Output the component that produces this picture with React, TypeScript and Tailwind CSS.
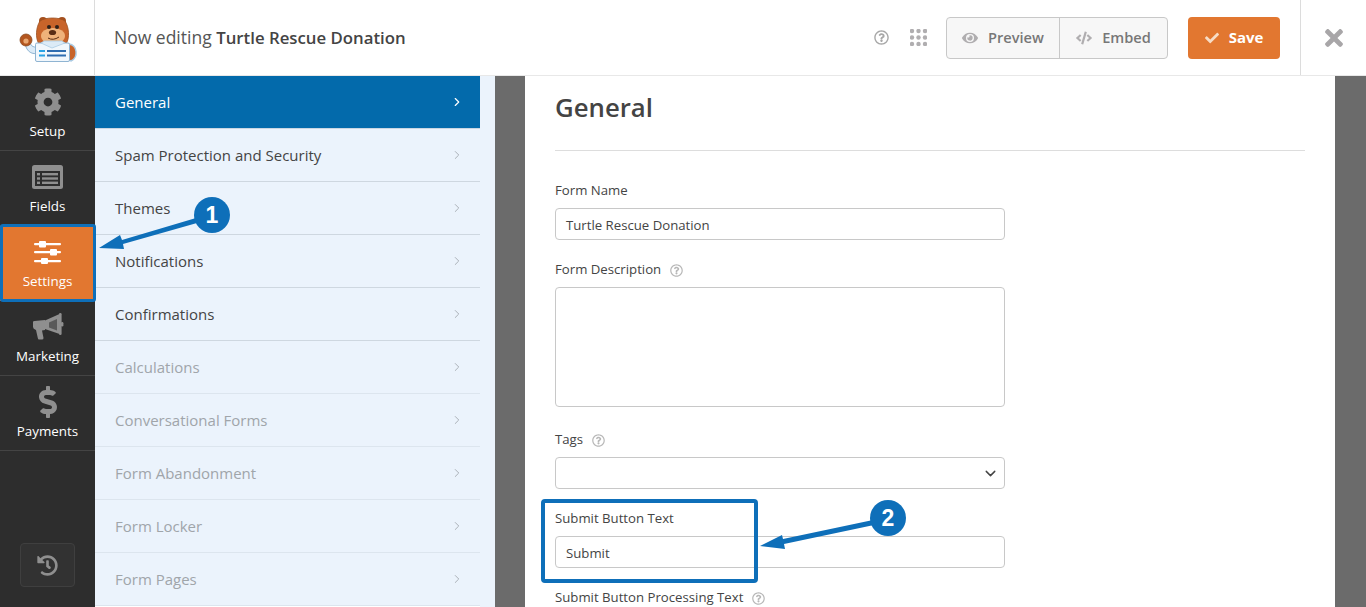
import { FaCog, FaDollarSign, FaHistory, FaEye, FaCode, FaCheck, FaTimes, FaRegQuestionCircle } from "react-icons/fa";
import { ChevronRight, ChevronDown } from "lucide-react";

function FieldsIcon() {
  return (
    <svg width="31" height="24" viewBox="0 0 31 24">
      <rect width="31" height="24" rx="2.5" fill="#8f8f8f" />
      <rect x="3" y="6" width="25" height="15" fill="#2d2d2d" />
      <g fill="#8f8f8f">
        <rect x="5" y="8" width="3" height="2.4" />
        <rect x="5" y="12.3" width="3" height="2.4" />
        <rect x="5" y="16.6" width="3" height="2.4" />
        <rect x="10" y="8" width="16" height="2.4" />
        <rect x="10" y="12.3" width="16" height="2.4" />
        <rect x="10" y="16.6" width="16" height="2.4" />
      </g>
    </svg>
  );
}

function SlidersIcon() {
  return (
    <svg width="27" height="24" viewBox="0 0 27 24" fill="#fff">
      <rect y="3" width="27" height="2.2" rx="1" />
      <rect y="11" width="27" height="2.2" rx="1" />
      <rect y="20" width="27" height="2.2" rx="1" />
      <rect x="5" y="1" width="7" height="6.4" rx="1" />
      <rect x="16" y="9" width="7" height="6.4" rx="1" />
      <rect x="7" y="18" width="7" height="6" rx="1" />
    </svg>
  );
}

function MegaphoneIcon() {
  return (
    <svg width="32" height="27" viewBox="0 0 32 27" fill="#8f8f8f">
      <path d="M1 9 Q1 8 2.5 8 L13 7 L13 17 L10 17.5 L11.5 25 Q11.5 26.5 10 26.5 L7 26.5 Q6 26.5 5.8 25 L4 17 Q1 16 1 14 Z" />
      <path d="M13 7.5 L27.5 1 L27.5 21 L13 16 Z" fill="#8f8f8f" />
      <path d="M17 9.5 L25 6 L25 17.5 L17 14.5 Z" fill="#2d2d2d" opacity="0.55" />
      <rect x="27" y="0" width="2.6" height="22" rx="1.2" />
      <rect x="29" y="9" width="2.4" height="4.5" rx="1.2" />
    </svg>
  );
}

const sideItems = [
  { label: "Setup", icon: <FaCog size={28} /> },
  { label: "Fields", icon: <FieldsIcon /> },
  { label: "Settings", icon: <SlidersIcon />, active: true },
  { label: "Marketing", icon: <MegaphoneIcon /> },
  { label: "Payments", icon: <FaDollarSign size={32} /> },
];

const panelItems = [
  { label: "General", active: true },
  { label: "Spam Protection and Security" },
  { label: "Themes" },
  { label: "Notifications" },
  { label: "Confirmations" },
  { label: "Calculations", disabled: true },
  { label: "Conversational Forms", disabled: true },
  { label: "Form Abandonment", disabled: true },
  { label: "Form Locker", disabled: true },
  { label: "Form Pages", disabled: true },
];

function BearLogo() {
  return (
    <svg width="60" height="50" viewBox="0 0 60 50">
      {/* raised paw and sleeve */}
      <path d="M6 30 C8 38 13 41 20 39 L20 33 C15 34 12 32 11 29 Z" fill="#dcebf7" stroke="#8fb4d2" strokeWidth="1" />
      <circle cx="7" cy="26" r="6" fill="#b4561f" stroke="#8a4a20" strokeWidth="0.8" />
      <circle cx="7" cy="27" r="2.6" fill="#e9a873" />
      {/* ears and head */}
      <circle cx="24" cy="7" r="4" fill="#a5501e" />
      <circle cx="43" cy="7" r="4" fill="#a5501e" />
      <path d="M21 7 C26 3 41 3 46 7 C50 13 51 24 47 30 L20 30 C16 24 17 13 21 7 Z" fill="#c8642a" stroke="#9a4f20" strokeWidth="0.8" />
      <ellipse cx="34" cy="22" rx="12" ry="8" fill="#efb27a" />
      <circle cx="30" cy="13" r="2" fill="#2e2019" />
      <circle cx="38" cy="13" r="2" fill="#2e2019" />
      <ellipse cx="33.5" cy="18.5" rx="3.6" ry="2.6" fill="#5a2d14" />
      <path d="M29 24 Q34 27 40 23" fill="none" stroke="#5a2d14" strokeWidth="1" />
      {/* right arm */}
      <path d="M50 30 C58 31 60 43 52 47 L49 46 Z" fill="#c8642a" stroke="#a9cbe4" strokeWidth="1.4" />
      {/* form sheet and collar */}
      <rect x="16.5" y="29" width="34" height="18.5" rx="1.5" fill="#f1f7fc" stroke="#8fb4d2" strokeWidth="1" />
      <path d="M22 29 L33 34 L46 29 L43 27 L25 27 Z" fill="#dcebf7" stroke="#a9cbe4" strokeWidth="0.8" />
      <rect x="20" y="36" width="6" height="2" fill="#2aa4e6" />
      <rect x="20" y="40.5" width="6" height="2" fill="#2aa4e6" />
      <rect x="28" y="36" width="19" height="2" fill="#2f6db0" />
      <rect x="28" y="40.5" width="19" height="2" fill="#2f6db0" />
    </svg>
  );
}

function Dots() {
  const pts = [2, 8.5, 15];
  return (
    <svg width="17" height="17" viewBox="0 0 17 17" fill="#b0aeb0">
      {pts.map((y) => pts.map((x) => <circle key={`${x}-${y}`} cx={x} cy={y} r="2.2" />))}
    </svg>
  );
}

function Field({ label, help, children, className }: { label: string; help?: boolean; children?: React.ReactNode; className?: string }) {
  return (
    <div className={className}>
      <div className="flex items-center gap-[9px] h-[20px] pt-[2px] text-[13.2px] text-[#444]">
        <span>{label}</span>
        {help && <FaRegQuestionCircle className="text-[#b8b8b8]" size={13} />}
      </div>
      {children}
    </div>
  );
}

function TextBox({ value }: { value?: string }) {
  return (
    <div className="mt-[8px] w-[450px] h-[32px] flex items-center px-[10px] pt-[3px] border border-[#c8c8c8] rounded-[4px] bg-white text-[13.2px] text-[#444]">
      {value}
    </div>
  );
}

export default function App() {
  return (
    <div className="relative w-[1366px] h-[607px] overflow-hidden bg-white font-['Open_Sans',sans-serif]">
      <header className="flex items-stretch h-[76px] border-b border-[#e8e8e8]">
        <div className="w-[95px] shrink-0 border-r border-[#dcdcdc] flex items-center justify-center pt-[2px] pl-[3px]">
          <BearLogo />
        </div>
        <div className="pl-[19px] flex items-center text-[17.5px] text-[#555]">
          Now editing&nbsp;<strong className="text-[16.8px] font-semibold text-[#444]">Turtle Rescue Donation</strong>
        </div>
        <div className="ml-auto flex items-center">
          <FaRegQuestionCircle className="text-[#a8a8a8]" size={15} />
          <div className="ml-[21px]"><Dots /></div>
          <div className="ml-[19px] flex h-[42px] border border-[#c8c8c8] rounded-[4px] bg-[#f7f7f7] text-[14.6px] font-semibold text-[#777]">
            <div className="w-[113px] flex items-center justify-center gap-[10px] border-r border-[#c8c8c8]">
              <FaEye className="text-[#b0aeb0]" size={16} />
              <span>Preview</span>
            </div>
            <div className="w-[107px] flex items-center justify-center gap-[10px]">
              <FaCode className="text-[#b0aeb0]" size={16} />
              <span>Embed</span>
            </div>
          </div>
          <div className="ml-[20px] w-[92px] h-[42px] flex items-center justify-center gap-[10px] rounded-[4px] bg-[#e27730] text-[15px] font-bold text-white">
            <FaCheck className="text-[#f6dcc6]" size={14} />
            <span>Save</span>
          </div>
          <div className="ml-[20px] w-[66px] self-stretch border-l border-[#dcdcdc] flex items-center justify-center">
            <FaTimes className="text-[#a8a6a8]" size={26} />
          </div>
        </div>
      </header>

      <div className="flex h-[531px]">
        <aside className="w-[95px] shrink-0 bg-[#2d2d2d] flex flex-col">
          {sideItems.map((item) => (
            <div
              key={item.label}
              className={
                item.active
                  ? "h-[75px] flex flex-col items-center bg-[#e27730] text-white"
                  : "h-[75px] flex flex-col items-center border-b border-[#444] text-white"
              }
            >
              <div className={item.active ? "h-[46px] flex items-center justify-center pt-[5px] text-white" : "h-[46px] flex items-center justify-center pt-[5px] text-[#8f8f8f]"}>
                {item.icon}
              </div>
              <span className="text-[13.4px] leading-[18px]">{item.label}</span>
            </div>
          ))}
          <div className="mt-auto mb-[20px] ml-[20px] w-[55px] h-[44px] flex items-center justify-center border border-[#3f3f3f] rounded-[4px] bg-[#323232] text-[#8f8f8f]">
            <FaHistory size={21} />
          </div>
        </aside>

        <nav className="w-[385px] shrink-0 flex flex-col">
          {panelItems.map((item) => (
            <div
              key={item.label}
              className={
                item.active
                  ? "h-[53px] shrink-0 flex items-center justify-between pl-[20px] pr-[16px] bg-[#036aab] border-b border-[#c9d6e2] text-white"
                  : item.disabled
                    ? "h-[53px] shrink-0 flex items-center justify-between pl-[20px] pr-[16px] bg-[#ebf3fc] border-b border-[#dce5ee] text-[#a0a5aa]"
                    : "h-[53px] shrink-0 flex items-center justify-between pl-[20px] pr-[16px] bg-[#ebf3fc] border-b border-[#ced7e0] text-[#444]"
              }
            >
              <span className="text-[15px]">{item.label}</span>
              <ChevronRight size={14} strokeWidth={item.active ? 2 : 1.6} className={item.active ? "text-white" : "text-[#a6acb3]"} />
            </div>
          ))}
        </nav>
        <div className="w-[15px] shrink-0 bg-[#ebf3fc]" />
        <div className="w-[30px] shrink-0 bg-[#6b6b6b]" />

        <main className="w-[810px] shrink-0 px-[30px] bg-white">
          <h1 className="h-[75px] border-b border-[#dddddd] pt-[12px] text-[25.75px] leading-[38px] font-semibold text-[#444]">General</h1>
          <Field label="Form Name" className="mt-[29px]">
            <TextBox value="Turtle Rescue Donation" />
          </Field>
          <Field label="Form Description" help className="mt-[19px]">
            <div className="mt-[8px] w-[450px] h-[120px] border border-[#c8c8c8] rounded-[4px] bg-white" />
          </Field>
          <Field label="Tags" help className="mt-[22px]">
            <div className="mt-[8px] w-[450px] h-[32px] flex items-center justify-end pr-[5px] border border-[#c8c8c8] rounded-[4px] bg-white text-[#444]">
              <ChevronDown size={17} strokeWidth={2} />
            </div>
          </Field>
          <Field label="Submit Button Text" className="mt-[19px]">
            <TextBox value="Submit" />
          </Field>
          <Field label="Submit Button Processing Text" help className="mt-[19px]" />
        </main>
        <div className="flex-1 bg-[#6b6b6b]" />
      </div>

      {/* annotations on top of the screenshot */}
      <div className="absolute left-0 top-[224px] w-[96px] h-[78px] border-[3px] border-[#0e6fb9] rounded-[3px]" />
      <div className="absolute left-[541px] top-[499px] w-[217px] h-[84px] border-[4px] border-[#0e6fb9] rounded-[4px]" />
      <svg className="absolute left-0 top-0 pointer-events-none" width="1366" height="607" fill="#0e6fb9">
        <path d="M196 218 L122 240 L120 235 L99 248 L124 249 L123 244 L197 223 Z" />
        <path d="M873 520 L783 539 L782 535 L760 546 L785 549 L784 544 L874 525 Z" />
        <circle cx="212" cy="215" r="18" />
        <circle cx="888" cy="518" r="18" />
      </svg>
      <div className="absolute left-[194px] top-[197px] w-[36px] h-[36px] flex items-center justify-center font-['Liberation_Sans',sans-serif] text-[23px] font-bold text-white">1</div>
      <div className="absolute left-[870px] top-[500px] w-[36px] h-[36px] flex items-center justify-center font-['Liberation_Sans',sans-serif] text-[23px] font-bold text-white">2</div>
    </div>
  );
}
